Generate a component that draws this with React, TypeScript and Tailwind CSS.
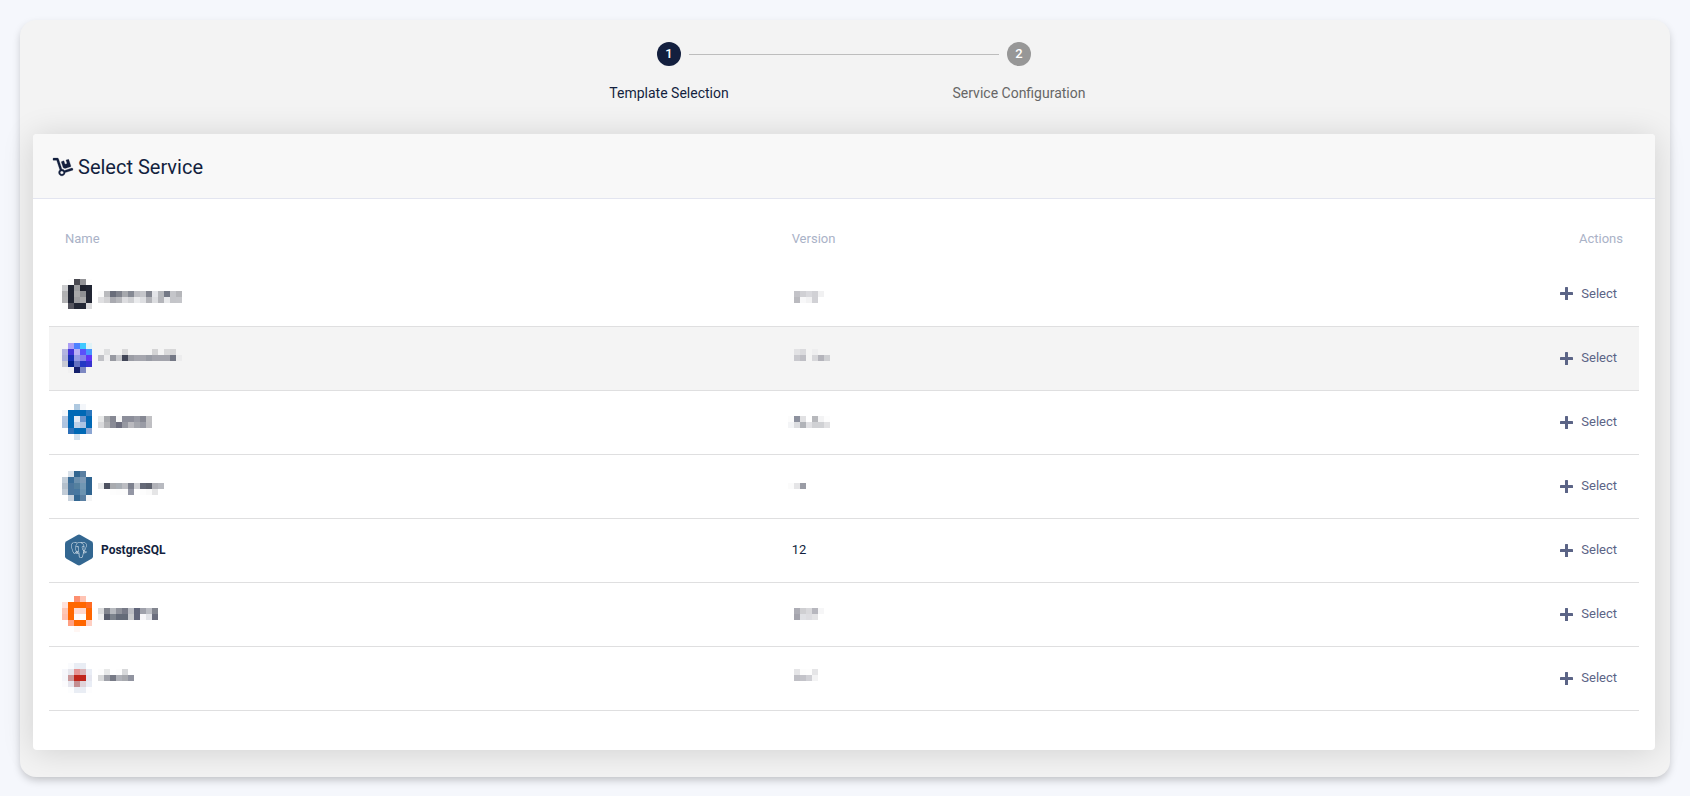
import { FaDolly } from "react-icons/fa";
import { SiPostgresql } from "react-icons/si";

// Each row is a list of 6px cells, "-" leaves a cell empty
type Pixels = string[];

type Service = {
  id: string;
  name?: string;
  version?: string;
  namePixels?: Pixels;
  versionPixels?: Pixels;
  highlighted?: boolean;
};

const services: Service[] = [
  {
    id: "service-1",
    namePixels: [
      "- #fcfcfc #4a4a52 #949498 #fdfdfd",
      "#cbccce #222634 #9c9da0 #20232f #222634",
      "#b0b0b2 #222634 #a8a8aa #8f9094 #222634 - #fafafa #b9babd #696d7a #7f828c #a6a8ad #858993 #bdbec3 #c5c6ca #82858f #e3e4e8 #b5b7bb #747986 #c4c5c9 #b5b6ba",
      "#b3b3b5 #222634 #9e9ea1 #a8a8aa #222634 - #e0e0e2 #d3d3d5 #a9aab0 #b7b8bc #dddde0 #cfd0d3 #eaebed #dedfe2 #b3b4b9 #dcdde0 #b4b5ba #e8e9eb #c4c5c9 #c5c6ca",
      "#fdfdfd #54545e #222634 #222634 #dadadc",
    ],
    versionPixels: ["-", "-", "- #c3c3c8 #d0d0d4 #d9d9dd #d1d1d5 #f1f1f2", "- #bababf #f8f8f9 #f2f2f3 #d1d1d5", "-"],
  },
  {
    id: "service-2",
    highlighted: true,
    namePixels: [
      "- #ab9ef5 #4c80ff #3fc8ff #e0f2f6",
      "#b3b5e0 #4334d8 #bab0f5 #5b50fa #4896ff - - #dedfe0 - - #d9d9da - - - - #d4d4d5 - #dadadb #d6d6d7",
      "#acb0d8 #1830b5 #969be4 #8580ea #6036f5 - #c0c1c6 #eeeeef #9799a1 #c6c7cb #424657 #9b9da5 #a5a6ae #a5a6ae #999ca5 #a3a4ac #a3a4ac #a3a4ac #747885 #ececed",
      "#c8cad4 #02208c #6271c0 #2338c4 #3833cf",
      "- #f0f0f1 #15206c #7d88c2 -",
    ],
    versionPixels: ["-", "- #e2e2e4 #dadadd - #eeeeef", "- #c9c9ce #bfbfc5 - #d7d7da #b4b4bb #cecfd2", "-", "-"],
  },
  {
    id: "service-3",
    namePixels: [
      "- - #afc9e0 #f3f6fa",
      "#f4f7fb #0068b5 #0068b5 #0068b5 #2c78be",
      "#b2c6e1 #0068b5 #e2e9f4 #6c94cc #0068b5 - #e8e9e9 #a7a9ad #868893 #f8f8f8 #8c8e9a #8c8e9a #999ba5 #868893 #c1c1c4",
      "#aec4e0 #0068b5 #bdd0e8 #abc2e2 #0068b5 - #d8d9db #b2b3b6 #898b96 #6c6e7e #9698a1 #bababf #a4a6ad #999ba5 #bfbfc3",
      "- #2c70b8 #0068b5 #0068b5 #8aa5d2",
      "- - #d3e1ef #fdfdfe",
    ],
    versionPixels: ["-", "-", "#fcfcfc #8d919e #e1e1e3 - #b7b8bc #f3f3f4 #fdfdfd", "#f3f4f6 #dcdde0 #b1b3b8 #e1e1e4 #d0d1d4 #d0d1d4 #e1e1e3", "-", "-"],
  },
  {
    id: "service-4",
    namePixels: [
      "- #d9e1e9 #326690 #5b80a2 -",
      "#c3ced9 #3a6d98 #6b90ae #7d9ab5 #2f6490",
      "#b4c0cc #4b769d #54809f #7197b3 #2f6490 - #e9eaeb #4d5160 #a9abaf #aaafb5 #bcbdc2 #7c808d #cfd0d4 #656977 #5f636f #b0b1b7 #b8bac0",
      "#c1cbd6 #4b769d #4777a0 #6c93b0 #2f6490 - - - #fdfdfd #fcfcfc #fcfcfc #9497a5 - #fdfdfd #fafafa #e5e5e6",
      "- #c8d2dd #336792 #5b80a2 #f4f5f6",
    ],
    versionPixels: ["-", "-", "#fbfbfb #e5e5e7 #9a9ca5", "-", "-"],
  },
  { id: "service-5", name: "PostgreSQL", version: "12" },
  {
    id: "service-6",
    namePixels: [
      "- - #fd8f70 #ffc4b4 -",
      "#ffe2dc #ff6600 #ff6600 #ff6600 #ff6c24",
      "#ffc6b5 #ff6600 #ffdad2 #ffd8ce #ff6600 - #dadbdc #81848d #b7babf #8f929b #777a87 #bbbdc4 #60657a #9fa1ab #bbbdc4 #82858f",
      "#ffbfae #ff6600 #fffafa - #ff6600 - #eeeeee #575c6b #7c838c #646b78 #646b78 #c8cace #60657a #f8f7fa #e3e4e9 #6b6e7e",
      "- #ff9f81 #ff6600 #ff6600 #ffcfc2",
      "- - #fff6f3",
    ],
    versionPixels: ["-", "-", "- #adadb5 #cfcfd2 #d9d9dc #b7b7be #f6f6f7", "- #a4a4ad #e0e1e5 #dddde1 #e3e3e5", "-", "-"],
  },
  {
    id: "service-7",
    namePixels: [
      "- #fafbfd #e9edf4 #e9edf4 -",
      "#f6f7fb #e5e5ec #e49494 #dcb4b7 #e9edf5 - #fdfdfd #e8e9e9 - #fdfdfd #d8d9db",
      "#f5f6fa #c99799 #c0261c #c0261c #e5e6ef - #d9dadb #9fa1a9 #777a86 #b0b2b9 #a8aaaf #9194a0",
      "#fbfbfd #e5e5ed #c38f92 #dfd3d9 #e9edf5",
      "- #fcfdfe #e9edf4 #e9edf4 #fdfdfe",
    ],
    versionPixels: ["-", "- #e5e5e7 #fcfcfc #fdfdfd #e5e5e7", "- #c0c0c6 #c3c3c9 #d0d0d5 #f3f3f4", "-", "-"],
  },
];

function Mosaic({ rows, className }: { rows: Pixels; className: string }) {
  const cells = rows.map((row) => row.split(" "));
  const width = Math.max(...cells.map((row) => row.length)) * 6;
  const height = cells.length * 6;

  return (
    <svg className={className} width={width} height={height} viewBox={`0 0 ${width} ${height}`} shapeRendering="crispEdges" aria-hidden="true">
      {cells.map((row, y) =>
        row.map((fill, x) =>
          fill === "-" ? null : <rect key={`${x}-${y}`} x={x * 6} y={y * 6} width="6" height="6" fill={fill} />
        )
      )}
    </svg>
  );
}

function PostgresLogo() {
  return (
    <span className="grid h-8 w-7 place-items-center">
      <svg className="col-start-1 row-start-1" width="28" height="32" viewBox="0 0 28 32" aria-hidden="true">
        <path d="M12.5 1Q14 .2 15.500 1L26.500 7.300Q28 8.200 28 9.800V22.200Q28 23.800 26.500 24.700L15.500 31Q14 31.800 12.500 31L1.500 24.700Q0 23.800 0 22.200V9.800Q0 8.200 1.500 7.300Z" fill="#336791" />
      </svg>
      <SiPostgresql className="col-start-1 row-start-1 h-4 w-4 text-[#e6eef4]" />
    </span>
  );
}

function PlusIcon() {
  return (
    <svg width="13" height="13" viewBox="0 0 13 13" fill="currentColor" aria-hidden="true">
      <rect x="5" width="3" height="13" rx="0.6" />
      <rect y="5" width="13" height="3" rx="0.6" />
    </svg>
  );
}

function Stepper() {
  return (
    <ol className="mx-auto flex w-full max-w-[700px] text-center text-sm">
      <li className="flex-1" aria-current="step">
        <div className="flex items-center gap-2">
          <span className="flex-1" />
          <span className="flex h-6 w-6 items-center justify-center rounded-full bg-[#131f3e] text-[13px] font-medium text-white">1</span>
          <span className="h-px flex-1 bg-[#bdbdbd]" />
        </div>
        <p className="mt-[17px] text-[#131f3e]">Template Selection</p>
      </li>
      <li className="flex-1">
        <div className="flex items-center gap-2">
          <span className="h-px flex-1 bg-[#bdbdbd]" />
          <span className="flex h-6 w-6 items-center justify-center rounded-full bg-[#979797] text-[13px] font-medium text-white">2</span>
          <span className="flex-1" />
        </div>
        <p className="mt-[17px] text-[#666666]">Service Configuration</p>
      </li>
    </ol>
  );
}

export default function App() {
  return (
    <div className="min-h-screen bg-[#f5f7fc] p-5 font-['Roboto',sans-serif] text-[#131f3e]">
      <main className="rounded-2xl bg-[#f3f3f3] pt-[22px] pr-[15px] pb-[27px] pl-[13px] shadow-[0_4px_8px_-1px_rgba(0,0,0,0.22)]">
        <Stepper />

        {/* Service list card */}
        <section className="mt-[31px] overflow-hidden rounded bg-white shadow-[0_2px_32px_rgba(0,0,0,0.14)]">
          <header className="flex h-[65px] items-center gap-[5px] border-b border-[#e3e5f0] bg-[#f8f8f8] px-5 pt-0.5">
            <FaDolly className="h-[18px] w-5 overflow-visible" strokeWidth="8" />
            <h1 className="text-xl">Select Service</h1>
          </header>

          <div className="px-4 pt-4 pb-[39px]">
            <table className="w-full table-fixed text-[13px]">
              <thead>
                <tr className="h-[47px] text-[#aab2c7]">
                  <th className="w-[45.7%] px-4 text-left font-normal">Name</th>
                  <th className="px-4 text-left font-normal">Version</th>
                  <th className="w-[20%] px-4 text-right font-normal">Actions</th>
                </tr>
              </thead>
              <tbody>
                {services.map((service) => (
                  <tr key={service.id} className={`h-16 border-b border-[#dfdfe0] ${service.highlighted ? "bg-[#f4f4f4]" : ""}`}>
                    <td className="px-4">
                      {service.namePixels ? (
                        <Mosaic rows={service.namePixels} className="-ml-[3px] block" />
                      ) : (
                        <div className="flex items-center gap-2 text-xs font-bold">
                          <PostgresLogo />
                          {service.name}
                        </div>
                      )}
                    </td>
                    <td className="px-4">
                      {service.versionPixels ? <Mosaic rows={service.versionPixels} className="-ml-1 block" /> : service.version}
                    </td>
                    <td className="px-4 text-right">
                      <button type="button" className="inline-flex items-center gap-2 px-1.5 py-2 text-[#5b6486]">
                        <PlusIcon />
                        Select
                      </button>
                    </td>
                  </tr>
                ))}
              </tbody>
            </table>
          </div>
        </section>
      </main>
    </div>
  );
}
